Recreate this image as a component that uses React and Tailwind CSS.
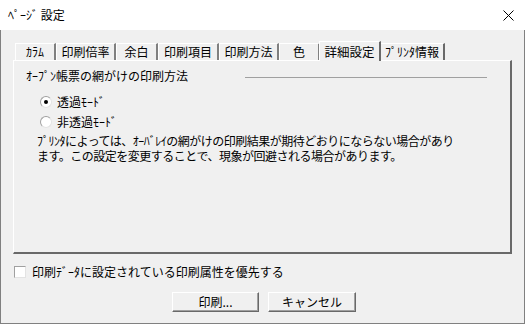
import React from "react";

const tabs = [
  { label: "ｶﾗﾑ", w: "w-[41px]" },
  { label: "印刷倍率", w: "w-[60px]" },
  { label: "余白", w: "w-[42px]" },
  { label: "印刷項目", w: "w-[61px]" },
  { label: "印刷方法", w: "w-[60px]" },
  { label: "色", w: "w-[41px]" },
];

function Radio({ checked }) {
  return (
    <span className="relative inline-block w-[12px] h-[12px] rounded-full bg-white border border-t-[#a0a0a0] border-l-[#a0a0a0] border-r-[#e3e3e3] border-b-[#e3e3e3]">
      {checked && (
        <span className="absolute left-[3px] top-[3px] w-[4px] h-[4px] rounded-full bg-black" />
      )}
    </span>
  );
}

export default function App() {
  return (
    <div
      className="w-[525px] h-[324px] flex flex-col text-[12px] leading-[14px] text-black"
      style={{ fontFamily: '"Noto Sans CJK JP", "Noto Sans", sans-serif' }}
    >
      {/* title bar */}
      <div className="h-[30px] bg-white flex items-center justify-between pl-[8px] pr-[10px] shrink-0">
        <span className="text-[12px]">ﾍﾟｰｼﾞ 設定</span>
        <svg width="11" height="11" viewBox="0 0 11 11" className="mr-[1px]">
          <path d="M0.5 0.5 L10.5 10.5 M10.5 0.5 L0.5 10.5" stroke="#000" strokeWidth="1" />
        </svg>
      </div>

      {/* body */}
      <div className="flex-1 bg-[#f0f0f0] border-l border-r border-b border-[#808080] pl-[12px] pr-[12px] pt-[10px] flex flex-col">
        {/* tabs */}
        <div className="h-[20px] flex items-end pl-[2px] relative z-10">
          {tabs.map((t) => (
            <div
              key={t.label}
              className={`${t.w} h-[17px] flex items-center justify-center border-t border-l border-t-white border-l-white border-r-2 border-r-[#808080] bg-[#f0f0f0] text-[12px] whitespace-nowrap`}
            >
              {t.label}
            </div>
          ))}
          <div className="w-[62px] h-[20px] -mb-[1px] flex items-center justify-center border-t border-l border-t-white border-l-white border-r-2 border-r-[#696969] bg-[#f0f0f0] text-[12.5px] whitespace-nowrap -ml-[1px]">
            詳細設定
          </div>
          <div className="w-[64px] h-[17px] flex items-center justify-center border-t border-t-white border-r-2 border-r-[#696969] bg-[#f0f0f0] text-[12px] whitespace-nowrap">
            ﾌﾟﾘﾝﾀ情報
          </div>
        </div>

        {/* panel */}
        <div className="h-[194px] w-[499px] border-t border-l border-t-white border-l-white border-r-2 border-b-2 border-r-[#696969] border-b-[#696969] pl-[12px] pt-[8px]">
          <div className="flex items-center">
            <span className="w-[219px] whitespace-nowrap">ｵｰﾌﾟﾝ帳票の網がけの印刷方法</span>
            <span className="w-[242px] h-[1px] bg-[#a0a0a0] mt-[2px]" />
          </div>
          <div className="mt-[12px] ml-[14px] flex items-center gap-[5px] h-[14px]">
            <Radio checked />
            <span>透過ﾓｰﾄﾞ</span>
          </div>
          <div className="mt-[6px] ml-[14px] flex items-center gap-[5px] h-[14px]">
            <Radio />
            <span>非透過ﾓｰﾄﾞ</span>
          </div>
          <div className="mt-[4px] ml-[11px] whitespace-nowrap tracking-[-0.5px] leading-[15px]">
            <div>ﾌﾟﾘﾝﾀによっては、ｵｰﾊﾞﾚｲの網がけの印刷結果が期待どおりにならない場合があり</div>
            <div>ます。この設定を変更することで、現象が回避される場合があります。</div>
          </div>
        </div>

        {/* checkbox */}
        <div className="mt-[11px] flex items-center gap-[6px] h-[14px]">
          <span className="inline-block ml-[1px] w-[12px] h-[12px] bg-white border border-t-[#a0a0a0] border-l-[#a0a0a0] border-r-[#e3e3e3] border-b-[#e3e3e3]" />
          <span className="whitespace-nowrap">印刷ﾃﾞｰﾀに設定されている印刷属性を優先する</span>
        </div>

        {/* buttons */}
        <div className="mt-[13px] flex pl-[159px] gap-[9px]">
          <button className="w-[87px] h-[20px] bg-[#f0f0f0] border border-t-white border-l-white border-r-[#696969] border-b-[#696969] shadow-[inset_-1px_-1px_0_#a0a0a0] text-[12px] leading-[14px] flex items-center justify-center">
            印刷...
          </button>
          <button className="w-[88px] h-[20px] bg-[#f0f0f0] border border-t-white border-l-white border-r-[#696969] border-b-[#696969] shadow-[inset_-1px_-1px_0_#a0a0a0] text-[12px] leading-[14px] flex items-center justify-center">
            キャンセル
          </button>
        </div>
      </div>
    </div>
  );
}
